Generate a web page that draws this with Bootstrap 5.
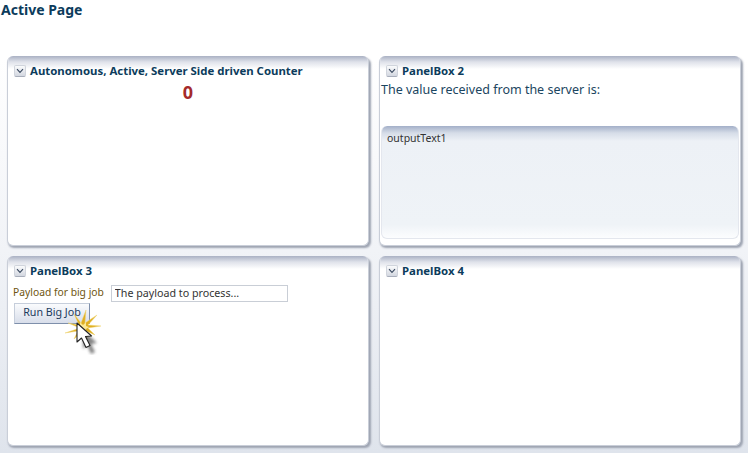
<!DOCTYPE html>
<html lang="en"><head><meta charset="utf-8"><title>Active Page</title>
<link href="https://cdn.jsdelivr.net/npm/bootstrap@5.3.0/dist/css/bootstrap.min.css" rel="stylesheet">
<style>
html,body{height:453px;overflow:hidden}
body{background:linear-gradient(#fff 0,#fff 60px,#f1f3f7 250px,#dfe4ec 453px);font-family:"Noto Sans",sans-serif;color:#003d5b;font-size:12px;width:748px}
.page-title{font-size:14px;font-weight:700;line-height:18px;margin:0;padding:1px 0 0 1px;height:56px;color:#0c3c5c}
.board{display:grid;grid-template-columns:362px 362px;grid-template-rows:190px 190px;gap:10px 10px;padding-left:7px}
.pbox{background:#fff;border:1px solid #c9ced8;border-top:0;border-radius:6px;position:relative;box-shadow:1.5px 2px 2px #9ea4b2;overflow:hidden;display:flex;flex-direction:column}
.pbox-top{background:linear-gradient(#aab1c3,#dfe2ea 6px,#fff 13px);height:13px;position:absolute;left:0;right:0;top:0}
.pbox-head{display:flex;align-items:center;gap:4px;height:18px;margin-top:6px;padding-left:6px;position:relative;font-weight:700;font-size:11.4px;color:#0c3c5c;white-space:nowrap}
.tog{width:12px;height:12px;border-radius:2px;background:linear-gradient(#fafbfc,#d3d7e0);border:1px solid #d0d4dc;border-bottom-color:#a8aebb;display:flex;align-items:center;justify-content:center;flex:none}
.count{font-size:18px;font-weight:700;color:#a52a2a;text-align:center;line-height:20px;margin-top:2px}
.srv{font-size:12.5px;line-height:18px;padding-left:1px;color:#1b4560;margin-top:1px}
.inner{margin:27px 1px 0 1px;flex:1 1 auto;margin-bottom:6px;border:1px solid #e4e7ee;border-top:0;border-radius:6px;background:linear-gradient(#a3afc8 0,#d6dde8 7px,#edf1f6 15px,#eff3f7 88%,#fcfdfe 100%);padding:5px 5px;font-size:10.5px;color:#333;line-height:14px}
.pform{display:flex;align-items:center;gap:7px;margin:4px 0 0 5px;height:18px}
.plabel{font-size:10.3px;color:#6e5510;white-space:nowrap}
.pinput{width:177px;height:17px;border:1px solid #c9ced6;background:#fff;font-size:10.7px;font-family:inherit;color:#333;padding:0 3px;border-radius:0;outline:0}
.runbtn{margin:1px 0 0 6px;width:76px;height:21px;padding:0 0 3px;background:linear-gradient(#fafbfd,#d8deea);border:1px solid #7e8fab;border-left-color:#c6cedb;border-top-color:#c6cedb;border-radius:0;color:#1c3a5c;font-size:10.7px;line-height:16px;text-align:center}
.pointer{position:absolute;left:60px;top:305px;width:56px;height:50px;pointer-events:none}
</style></head>
<body>
<h1 class="page-title">Active Page</h1>
<div class="board">
<section class="pbox"><div class="pbox-top"></div>
<div class="pbox-head"><span class="tog"><svg width="8" height="6" viewBox="0 0 8 6"><path d="M1 1.2 4 4.4 7 1.2" fill="none" stroke="#3a4a60" stroke-width="1.1"/></svg></span>Autonomous, Active, Server Side driven Counter</div>
<div class="count">0</div></section>
<section class="pbox"><div class="pbox-top"></div>
<div class="pbox-head"><span class="tog"><svg width="8" height="6" viewBox="0 0 8 6"><path d="M1 1.2 4 4.4 7 1.2" fill="none" stroke="#3a4a60" stroke-width="1.1"/></svg></span>PanelBox 2</div>
<div class="srv">The value received from the server is:</div>
<div class="inner">outputText1</div></section>
<section class="pbox"><div class="pbox-top"></div>
<div class="pbox-head"><span class="tog"><svg width="8" height="6" viewBox="0 0 8 6"><path d="M1 1.2 4 4.4 7 1.2" fill="none" stroke="#3a4a60" stroke-width="1.1"/></svg></span>PanelBox 3</div>
<div class="pform"><label class="plabel" for="pl">Payload for big job</label><input id="pl" class="pinput" value="The payload to process..."></div>
<button class="btn runbtn" type="button">Run Big Job</button></section>
<section class="pbox"><div class="pbox-top"></div>
<div class="pbox-head"><span class="tog"><svg width="8" height="6" viewBox="0 0 8 6"><path d="M1 1.2 4 4.4 7 1.2" fill="none" stroke="#3a4a60" stroke-width="1.1"/></svg></span>PanelBox 4</div></section>
</div>
<svg class="pointer" viewBox="0 0 56 50">
<defs><filter id="bl" x="-50%" y="-50%" width="200%" height="200%"><feGaussianBlur stdDeviation="1.6"/></filter></defs>
<g transform="translate(0 3)">
<path d="M20 20 8 15 19 17 14 6 21 15 26 2 25 15 37 7 28 17 41 18 28 20 35 27 26 23 27 31 22 24 14 31 18 23 5 25Z" fill="#dfae22" stroke="#f0d87a" stroke-width=".5"/>
<path d="M20 20 15 18 20 18 20 14 23 17 26 14 26 18 29 19 26 21 25 24 22 22 18 24Z" fill="#fbe896"/>
</g>
<path d="M20 22V41L24 37 28 46 32 44 28 36 34 35Z" fill="#333" opacity=".6" filter="url(#bl)" transform="translate(3 3)"/>
<path d="M17 18V37L21.5 33 26 42.5 30 40.5 25.5 31.5 31.5 31Z" fill="#fff" stroke="#222" stroke-width="1.1" stroke-linejoin="round"/>
</svg>
<script src="https://cdn.jsdelivr.net/npm/bootstrap@5.3.0/dist/js/bootstrap.bundle.min.js"></script>
</body></html>
